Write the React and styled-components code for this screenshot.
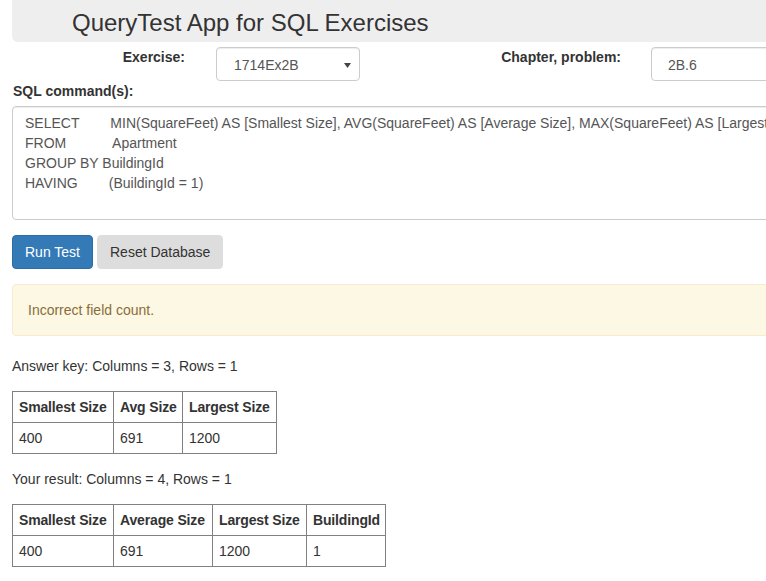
import React from "react";
import styled, { createGlobalStyle } from "styled-components";

const GlobalStyle = createGlobalStyle`
    html, body {
        margin: 0;
        overflow: hidden;
    }
    body {
        font-family: "Liberation Sans", Arial, sans-serif;
        font-size: 14px;
        line-height: 20px;
        color: #333;
        background: #fff;
    }
`;

const Page = styled.div`
    width: 1100px;
    padding-left: 12px;
`;

const Jumbotron = styled.div`
    height: 42px;
    box-sizing: border-box;
    background: #eee;
    border-radius: 0 0 0 6px;
    padding: 10px 0 0 60px;
`;

const Title = styled.h1`
    margin: 0;
    font-size: 24px;
    line-height: 26px;
    font-weight: 500;
    color: #333;
`;

const FormRow = styled.div`
    display: flex;
    align-items: flex-start;
    margin-top: 5px;
`;

const ControlLabel = styled.label`
    display: block;
    width: ${props => props.width}px;
    text-align: right;
    font-weight: bold;
    margin-right: ${props => props.gap}px;
`;

const FakeSelect = styled.div`
    display: flex;
    align-items: center;
    justify-content: space-between;
    box-sizing: border-box;
    width: 144px;
    height: 34px;
    padding: 2px 8px 0 17px;
    border: 1px solid #ccc;
    border-radius: 4px;
    color: #555;
    background: #fff;
    box-shadow: inset 0 1px 1px rgba(0, 0, 0, 0.075);
`;

const TextInput = styled.input`
    box-sizing: border-box;
    width: 420px;
    height: 34px;
    padding: 2px 16px 0;
    border: 1px solid #ccc;
    border-radius: 4px;
    font: inherit;
    color: #555;
    box-shadow: inset 0 1px 1px rgba(0, 0, 0, 0.075);
    outline: none;
`;

const BlockLabel = styled.label`
    display: block;
    font-weight: bold;
    margin: 0 0 5px 1px;
`;

const SqlArea = styled.textarea`
    display: block;
    box-sizing: border-box;
    width: 100%;
    height: 114px;
    margin: 0;
    padding: 6px 12px;
    border: 1px solid #ccc;
    border-radius: 4px;
    font: inherit;
    line-height: 20px;
    color: #555;
    white-space: pre;
    overflow: hidden;
    resize: vertical;
    box-shadow: inset 0 1px 1px rgba(0, 0, 0, 0.075);
    outline: none;
`;

const ButtonBar = styled.div`
    display: flex;
    gap: 4px;
    margin-top: 15px;
`;

const Button = styled.button`
    box-sizing: border-box;
    height: 34px;
    padding: 0 12px;
    border: 1px solid ${props => (props.primary ? "#2e6da4" : "#ddd")};
    border-radius: 4px;
    background: ${props => (props.primary ? "#337ab7" : "#ddd")};
    color: ${props => (props.primary ? "#fff" : "#333")};
    font: inherit;
    cursor: pointer;
`;

const Alert = styled.div`
    margin: 15px 0 20px;
    padding: 15px;
    border: 1px solid #faebcc;
    border-radius: 4px;
    background: #fcf8e3;
    color: #8a6d3b;
`;

const Caption = styled.p`
    margin: 0 0 15px;
`;

const ResultTable = styled.table`
    border-collapse: collapse;
    table-layout: fixed;
    margin-bottom: 15px;

    & th, & td {
        border: 1px solid #808080;
        padding: 5px 6px;
        text-align: left;
        line-height: 20px;
        white-space: nowrap;
        overflow: visible;
    }

    & th {
        font-weight: bold;
        letter-spacing: -0.15px;
    }
`;

const sql = [
    "SELECT        MIN(SquareFeet) AS [Smallest Size], AVG(SquareFeet) AS [Average Size], MAX(SquareFeet) AS [Largest Size], BuildingId",
    "FROM            Apartment",
    "GROUP BY BuildingId",
    "HAVING        (BuildingId = 1)",
].join("\n");

const answerKey = {
    columns: [
        { name: "Smallest Size", width: 101 },
        { name: "Avg Size", width: 69 },
        { name: "Largest Size", width: 94 },
    ],
    rows: [["400", "691", "1200"]],
};

const yourResult = {
    columns: [
        { name: "Smallest Size", width: 101 },
        { name: "Average Size", width: 99 },
        { name: "Largest Size", width: 94 },
        { name: "BuildingId", width: 79 },
    ],
    rows: [["400", "691", "1200", "1"]],
};

const DataTable = ({ data }) => {
    let total = data.columns.reduce((sum, col) => sum + col.width, 0) + 1;

    return (
        <ResultTable style={{ width: total }}>
            <colgroup>
                {data.columns.map(col => <col key={col.name} style={{ width: col.width }} />)}
            </colgroup>
            <thead>
                <tr>
                    {data.columns.map(col => <th key={col.name}>{col.name}</th>)}
                </tr>
            </thead>
            <tbody>
                {data.rows.map((row, i) => (
                    <tr key={i}>
                        {row.map((cell, j) => <td key={j}>{cell}</td>)}
                    </tr>
                ))}
            </tbody>
        </ResultTable>
    );
};

const App = () => {
    return (
        <Page>
            <GlobalStyle />
            <Jumbotron>
                <Title>QueryTest App for SQL Exercises</Title>
            </Jumbotron>

            <FormRow>
                <ControlLabel width={173} gap={31}>Exercise:</ControlLabel>
                <FakeSelect>
                    <span>1714Ex2B</span>
                    <svg width="7" height="5" viewBox="0 0 7 5">
                        <polygon points="0,0 7,0 3.5,5" fill="#444" />
                    </svg>
                </FakeSelect>
                <ControlLabel width={261} gap={30}>Chapter, problem:</ControlLabel>
                <TextInput readOnly value="2B.6" />
            </FormRow>

            <BlockLabel>SQL command(s):</BlockLabel>
            <SqlArea readOnly rows={5} value={sql} />

            <ButtonBar>
                <Button primary>Run Test</Button>
                <Button>Reset Database</Button>
            </ButtonBar>

            <Alert>Incorrect field count.</Alert>

            <Caption>Answer key: Columns = 3, Rows = 1</Caption>
            <DataTable data={answerKey} />

            <Caption>Your result: Columns = 4, Rows = 1</Caption>
            <DataTable data={yourResult} />
        </Page>
    );
};

export default App;
